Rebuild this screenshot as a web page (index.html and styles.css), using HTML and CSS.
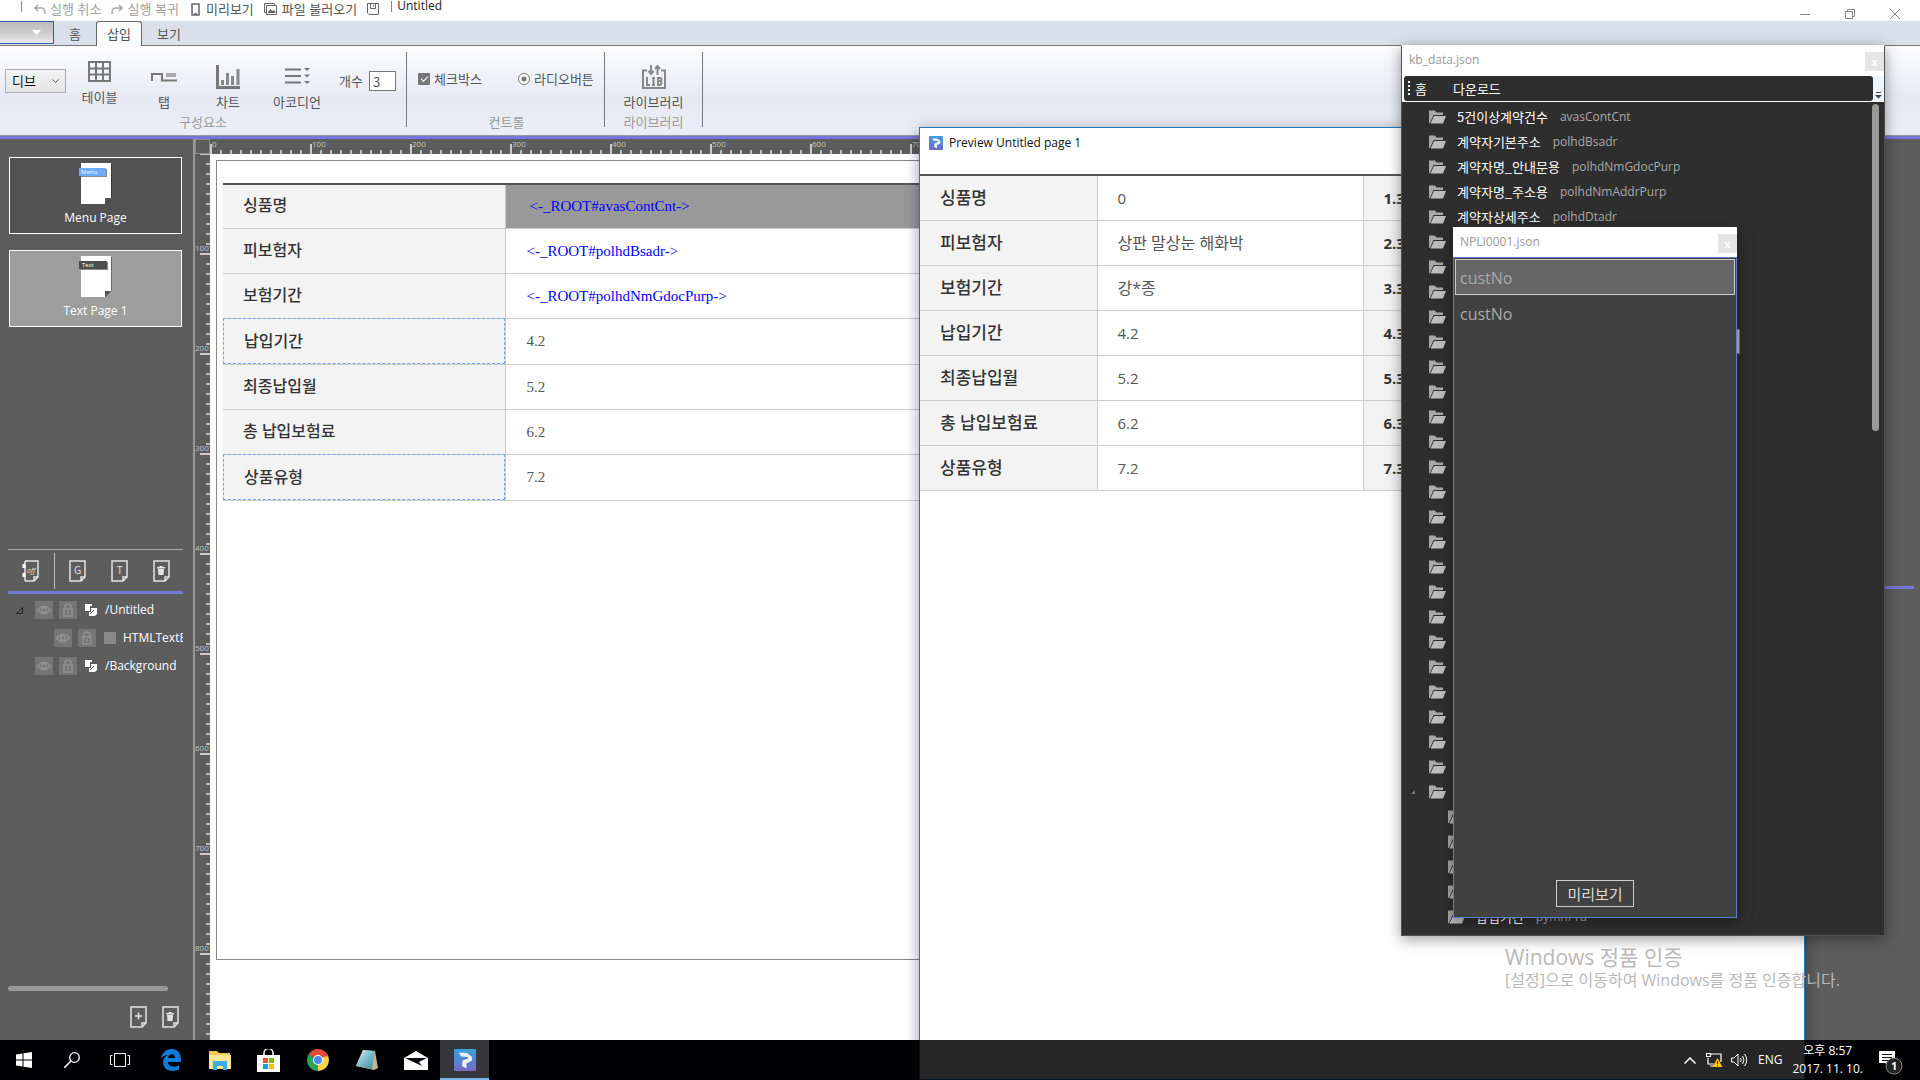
FILE: index.html
```html
<!DOCTYPE html>
<html lang="ko">
<head>
<meta charset="utf-8">
<title>Untitled</title>
<link rel="stylesheet" href="styles.css">
</head>
<body>
<svg width="0" height="0" class="defs" aria-hidden="true">
  <defs>
    <linearGradient id="brand" x1="0" y1="0" x2="0" y2="1"><stop offset="0" stop-color="#3aa0dc"/><stop offset="1" stop-color="#7468c8"/></linearGradient>
    <linearGradient id="glass" x1="0" y1="0" x2="1" y2="1"><stop offset="0" stop-color="#e4f4f8"/><stop offset=".5" stop-color="#7dbccb"/><stop offset="1" stop-color="#3f8ca0"/></linearGradient>
    <symbol id="folder" viewBox="0 0 17 14"><path d="M0 13V0.500h6l1.500 2H14v2.500H4.500L1 13z" fill="#a9a9a9"/><path d="M5 6h12l-3 7.500H1.500z" fill="#bdbdbd"/></symbol>
    <symbol id="eye" viewBox="0 0 18 18"><path d="M2.500 9Q9 1.500 15.500 9Q9 16.500 2.500 9z" fill="none" stroke="#929292" stroke-width="1.500"/><circle cx="9" cy="9" r="2.200" fill="none" stroke="#929292" stroke-width="1.500"/></symbol>
    <symbol id="lock" viewBox="0 0 18 18"><rect x="5" y="8" width="8" height="7" fill="none" stroke="#929292" stroke-width="1.500"/><path d="M6 8V6a3 3 0 0 1 6 0v2M9 10v3" fill="none" stroke="#929292" stroke-width="1.500"/></symbol>
    <symbol id="layers" viewBox="0 0 12 12"><path d="M0 0h7v2H5v5H0z" fill="#fff"/><path d="M6 4h6v6l-2 2H4V8h2z" fill="#fff"/><path d="M5 10l4-4" stroke="#5d5d5d"/></symbol>
    <symbol id="sheet" viewBox="0 0 17 22"><path d="M1 1h15v16l-4 4H1z" fill="none" stroke="#e4e4e4" stroke-width="1.500"/><path d="M16 17h-4v4" fill="none" stroke="#e4e4e4" stroke-width="1.500"/></symbol>
    <symbol id="bin" viewBox="0 0 8 9"><path d="M0 1h2.500V0h3v1H8v1.500H0zM1 3h6l-.5 6h-5z" fill="#e4e4e4"/></symbol>
    <symbol id="brandmark" viewBox="0 0 22 22"><rect width="22" height="22" rx="1" fill="url(#brand)"/><path d="M5 3.500l8 .5 5 4v3.500l-5.500 3v5L8 17l.5-5.500L14 9.500V8l-7-.5z" fill="#f0f0f4"/></symbol>
  </defs>
</svg>

<main class="app">
  <header class="titlebar">
    <span class="bar"></span>
    <button class="quick off q-undo"><svg width="12" height="11" viewBox="0 0 12 11"><path d="M4 1L1 4l3 3M1 4h7q3 0 3 6" fill="none" stroke="#a6a6a6" stroke-width="1.500"/></svg>실행 취소</button>
    <button class="quick off q-redo"><svg width="12" height="11" viewBox="0 0 12 11"><path d="M8 1l3 3-3 3M11 4H4q-3 0-3 6" fill="none" stroke="#a6a6a6" stroke-width="1.500"/></svg>실행 복귀</button>
    <button class="quick q-view"><svg width="9" height="13" viewBox="0 0 9 13"><path d="M1 1h7v11H1zM3 11h3" fill="none" stroke="#666" stroke-width="1.500"/></svg>미리보기</button>
    <button class="quick q-open"><svg width="13" height="12" viewBox="0 0 13 12"><path d="M2.500 9.500h-2v-9h10v1.500M2.500 2.500h10v9h-10z" fill="none" stroke="#666"/><path d="M3.500 10l3-4 2 2 1.500-1 2 3z" fill="#666"/></svg>파일 불러오기</button>
    <button class="quick q-save" aria-label="저장"><svg width="12" height="12" viewBox="0 0 12 12"><path d="M.5.500h11v11H2l-1.500-1.500zM3.500.500v5h5v-5M6.500 1.500v2" fill="none" stroke="#666"/></svg></button>
    <span class="bar thin"></span>
    <span class="doc">Untitled</span>
    <span class="wincontrols">
      <button aria-label="최소화"><svg width="10" height="10"><path d="M0 5.500h10" stroke="#888"/></svg></button>
      <button aria-label="이전 크기로"><svg width="10" height="10"><path d="M.5 2.500h7v7h-7zM2.500 2V.500h7v7H8" fill="none" stroke="#888"/></svg></button>
      <button aria-label="닫기"><svg width="10" height="10"><path d="M0 0l10 10M10 0L0 10" stroke="#888"/></svg></button>
    </span>
  </header>
  <nav class="tabs">
    <button class="filemenu" aria-label="파일"><svg width="9" height="6"><path d="M0 0h9L4.500 5z" fill="#fff"/></svg></button>
    <button class="tab">홈</button>
    <button class="tab on">삽입</button>
    <button class="tab">보기</button>
  </nav>
  <section class="ribbon">
    <div class="group g1">
      <div class="tools">
        <div class="combo"><select aria-label="요소"><option>디브</option></select><svg width="7" height="5"><path d="M.5.500l3 3 3-3" fill="none" stroke="#555"/></svg></div>
        <button class="tool t-table"><svg width="23" height="21" viewBox="0 0 23 21"><path d="M1 1h21v19H1zM1 7.500h21M1 13.500h21M8 1v19M15 1v19" fill="none" stroke="#777" stroke-width="2"/></svg>테이블</button>
        <button class="tool t-tab"><svg width="26" height="9" viewBox="0 0 26 9"><path d="M1 8V1h10v6.500h15" fill="none" stroke="#777" stroke-width="2"/><path d="M15 0h10v4H15z" fill="#aaa"/></svg>탭</button>
        <button class="tool t-chart"><svg width="24" height="24" viewBox="0 0 24 24"><path d="M1.500 0v22.500H24" fill="none" stroke="#777" stroke-width="3"/><path d="M6.500 20v-5M11.500 20V8M16.500 20v-9M22 20V4" stroke="#888" stroke-width="3"/></svg>차트</button>
        <button class="tool t-acc"><svg width="25" height="16" viewBox="0 0 25 16"><path d="M0 1.500h16M0 8h16M0 14.500h16" stroke="#777" stroke-width="2"/><path d="M19 0h6l-3 3zM19 6.500h6l-3 3zM19 13h6l-3 3z" fill="#777"/></svg>아코디언</button>
        <label class="count">개수<input type="text" value="3"></label>
      </div>
      <div class="caption">구성요소</div>
    </div>
    <div class="group g2">
      <div class="tools">
        <label class="opt o-check"><input type="checkbox" checked>체크박스</label>
        <label class="opt"><input type="radio" checked>라디오버튼</label>
      </div>
      <div class="caption">컨트롤</div>
    </div>
    <div class="group g3">
      <div class="tools">
        <button class="tool t-lib"><svg width="24" height="24" viewBox="0 0 24 24"><path d="M5 5.500H1V23h22V5.500h-4" fill="none" stroke="#888" stroke-width="2"/><path d="M9 0v8M15.500 10V2M6.500 6L9 9l2.500-3M13 4l2.500-3L18 4M5 12v8h3M10 13h3M11.500 12v8M10 20h3M16 12v8M15.500 13h3q2 1.500 0 3h-3M18 16q3 2 0 4h-3" fill="none" stroke="#888" stroke-width="2"/></svg>라이브러리</button>
      </div>
      <div class="caption">라이브러리</div>
    </div>
  </section>
  <div class="work">
    <aside class="side">
      <div class="pages">
        <button class="page"><svg width="33" height="42" viewBox="0 0 33 42"><path d="M4 1h29v33l-6 7H4z" fill="#3a3a3a"/><path d="M2 0h30v35h-6v6H2z" fill="#fff"/><path d="M26 41v-6h6z" fill="#555"/><path d="M2 6h26v8H2z" fill="#888"/><path d="M0 5h27v8H0z" fill="#6aacff"/><text x="2" y="11" class="tiny">Menu</text></svg>Menu Page</button>
        <button class="page on"><svg width="33" height="42" viewBox="0 0 33 42"><path d="M4 1h29v33l-6 7H4z" fill="#666"/><path d="M2 0h30v35h-6v6H2z" fill="#fff"/><path d="M26 41v-6h6z" fill="#555"/><path d="M2 6h27v8H2z" fill="#888"/><path d="M0 5h28v8H0z" fill="#4d4d4d"/><text x="3" y="11" class="tiny">Text</text></svg>Text Page 1</button>
      </div>
      <div class="layers">
        <div class="layerbar">
          <button class="k-off" aria-label="off"><svg width="17" height="22"><path d="M3 1h13v16l-4 4H3M16 17h-4v4M3 1v20" fill="none" stroke="#e4e4e4" stroke-width="1.500"/><path d="M2 4v4M2 13v4" stroke="#fff" stroke-width="3"/><text x="5" y="13" class="glyph it">off</text></svg></button>
          <button aria-label="G"><svg width="17" height="22"><use href="#sheet"/><text x="5" y="14" class="glyph">G</text></svg></button>
          <button aria-label="T"><svg width="17" height="22"><use href="#sheet"/><text x="6" y="14" class="glyph">T</text></svg></button>
          <button aria-label="삭제"><svg width="17" height="22"><use href="#sheet"/><use href="#bin" x="4" y="6" width="8" height="9"/></svg></button>
        </div>
        <ul class="tree">
          <li><svg class="exp" width="7" height="7"><path d="M.5 6.500h6v-6z" fill="none" stroke="#222"/></svg><svg class="box"><use href="#eye"/></svg><svg class="box"><use href="#lock"/></svg><svg class="ly"><use href="#layers"/></svg>/Untitled</li>
          <li class="child"><svg class="box"><use href="#eye"/></svg><svg class="box"><use href="#lock"/></svg><span class="sq"></span>HTMLTextE</li>
          <li class="root"><svg class="box"><use href="#eye"/></svg><svg class="box"><use href="#lock"/></svg><svg class="ly"><use href="#layers"/></svg>/Background</li>
        </ul>
        <div class="hscroll"></div>
        <div class="pagebar">
          <button aria-label="추가"><svg width="17" height="22"><use href="#sheet"/><path d="M5 10h7M8.500 6.500v7" stroke="#e4e4e4" stroke-width="1.500"/></svg></button>
          <button aria-label="삭제"><svg width="17" height="22"><use href="#sheet"/><use href="#bin" x="4" y="6" width="8" height="9"/></svg></button>
        </div>
      </div>
    </aside>
    <div class="stage">
      <div class="corner"></div>
      <div class="hruler"><span>0</span><span>100</span><span>200</span><span>300</span><span>400</span><span>500</span><span>600</span><span>700</span></div>
      <div class="vruler"><span>100</span><span>200</span><span>300</span><span>400</span><span>500</span><span>600</span><span>700</span><span>800</span></div>
      <div class="canvas">
        <div class="sheet">
          <table class="grid edit">
            <tr><th>싱품명</th><td class="sel"><a href="#">&lt;-_ROOT#avasContCnt-&gt;</a></td></tr>
            <tr><th>피보험자</th><td><a href="#">&lt;-_ROOT#polhdBsadr-&gt;</a></td></tr>
            <tr><th>보험기간</th><td><a href="#">&lt;-_ROOT#polhdNmGdocPurp-&gt;</a></td></tr>
            <tr class="mark"><th>납입기간</th><td>4.2</td></tr>
            <tr><th>최종납입월</th><td>5.2</td></tr>
            <tr><th>총 납입보험료</th><td>6.2</td></tr>
            <tr class="mark"><th>상품유형</th><td>7.2</td></tr>
          </table>
        </div>
      </div>
    </div>
    <aside class="props"><div class="rule"></div></aside>
  </div>
</main>

<section class="win preview">
  <header><svg width="14" height="14"><use href="#brandmark"/></svg>Preview Untitled page 1</header>
  <table class="grid">
    <tr><th>싱품명</th><td>0</td><th>1.3</th></tr>
    <tr><th>피보험자</th><td class="ko">상판 말상눈 해화박</td><th>2.3</th></tr>
    <tr><th>보험기간</th><td class="ko">강*종</td><th>3.3</th></tr>
    <tr><th>납입기간</th><td>4.2</td><th>4.3</th></tr>
    <tr><th>최종납입월</th><td>5.2</td><th>5.3</th></tr>
    <tr><th>총 납입보험료</th><td>6.2</td><th>6.3</th></tr>
    <tr><th>상품유형</th><td>7.2</td><th>7.3</th></tr>
  </table>
</section>

<section class="win data">
  <header class="wtitle">kb_data.json<button aria-label="닫기">x</button></header>
  <div class="menurow"><div class="menu"><span class="grip"></span><button>홈</button><button>다운로드</button></div><svg width="11" height="25" viewBox="0 0 11 25"><path d="M3 16.500h5" stroke="#444"/><path d="M2 19h7l-3.500 3.500z" fill="#444"/></svg></div>
  <div class="databody">
    <ul class="fields">
      <li><svg><use href="#folder"/></svg>5건이상계약건수<em>avasContCnt</em></li>
      <li><svg><use href="#folder"/></svg>계약자기본주소<em>polhdBsadr</em></li>
      <li><svg><use href="#folder"/></svg>계약자명_안내문용<em>polhdNmGdocPurp</em></li>
      <li><svg><use href="#folder"/></svg>계약자명_주소용<em>polhdNmAddrPurp</em></li>
      <li><svg><use href="#folder"/></svg>계약자상세주소<em>polhdDtadr</em></li>
      <li><svg><use href="#folder"/></svg></li><li><svg><use href="#folder"/></svg></li>
      <li><svg><use href="#folder"/></svg></li><li><svg><use href="#folder"/></svg></li>
      <li><svg><use href="#folder"/></svg></li><li><svg><use href="#folder"/></svg></li>
      <li><svg><use href="#folder"/></svg></li><li><svg><use href="#folder"/></svg></li>
      <li><svg><use href="#folder"/></svg></li><li><svg><use href="#folder"/></svg></li>
      <li><svg><use href="#folder"/></svg></li><li><svg><use href="#folder"/></svg></li>
      <li><svg><use href="#folder"/></svg></li><li><svg><use href="#folder"/></svg></li>
      <li><svg><use href="#folder"/></svg></li><li><svg><use href="#folder"/></svg></li>
      <li><svg><use href="#folder"/></svg></li><li><svg><use href="#folder"/></svg></li>
      <li><svg><use href="#folder"/></svg></li><li><svg><use href="#folder"/></svg></li>
      <li><svg><use href="#folder"/></svg></li><li><svg><use href="#folder"/></svg></li>
      <li class="open"><svg><use href="#folder"/></svg></li>
      <li class="sub"><svg><use href="#folder"/></svg></li><li class="sub"><svg><use href="#folder"/></svg></li>
      <li class="sub"><svg><use href="#folder"/></svg></li><li class="sub"><svg><use href="#folder"/></svg></li>
      <li class="sub"><svg><use href="#folder"/></svg>납입기간<em>pymnPrd</em></li>
    </ul>
    <div class="vscroll"></div>
  </div>
</section>

<span class="knob"></span>
<section class="win dialog">
  <header class="wtitle">NPLI0001.json<button aria-label="닫기">x</button></header>
  <div class="dbody">
    <ul><li class="on">custNo</li><li>custNo</li></ul>
    <button>미리보기</button>
  </div>
</section>

<div class="watermark"><p class="big">Windows 정품 인증</p><p>[설정]으로 이동하여 Windows를 정품 인증합니다.</p></div>

<footer class="taskbar">
  <button aria-label="시작"><svg width="16" height="16"><path d="M0 2.500l6.500-1V7.500H0zM7.500 1.300L16 0v7.500H7.500zM0 8.500h6.500v6L0 13.600zM7.500 8.500H16V16l-8.500-1.300z" fill="#fff"/></svg></button>
  <button aria-label="검색"><svg width="16" height="16"><circle cx="10.500" cy="5.500" r="4.800" fill="none" stroke="#fff" stroke-width="1.300"/><path d="M7 9l-7 7" stroke="#fff" stroke-width="1.500"/></svg></button>
  <button aria-label="작업 보기"><svg width="20" height="14"><path d="M4.500.500h11v13h-11zM2.500 2.500h-2v9h2M17.500 2.500h2v9h-2" fill="none" stroke="#fff"/></svg></button>
  <button class="app1" aria-label="Edge"><svg width="20" height="22" viewBox="0 0 20 22"><path d="M0 10C1 3 6 0 10.500 0 17 0 20 5 20 10v3H7c0 5 7 6 11 3v4.500C10 24 2 21 2 13c0-3 2-5.500 5-7C3 6 1 8 0 10zM7 9h7c0-5-6-5-7 0z" fill="#0f7ad8"/></svg></button>
  <button class="app1" aria-label="탐색기"><svg width="22" height="19" viewBox="0 0 22 19"><path d="M0 0h8l2 2h11v4H0z" fill="#f5c752"/><path d="M0 4h22v14H0z" fill="#ffe797"/><path d="M4 19v-9h14v9h-4v-4H8v4z" fill="#3aaee8"/></svg></button>
  <button class="app1" aria-label="스토어"><svg width="23" height="23" viewBox="0 0 23 23"><path d="M7 7V4a4 4 0 0 1 9 0v3" fill="none" stroke="#fff" stroke-width="1.500"/><path d="M0 6h23v17H0z" fill="#fff"/><path d="M6 9h5v5H6z" fill="#f25022"/><path d="M12 9h5v5h-5z" fill="#7fba00"/><path d="M6 15h5v5H6z" fill="#00a4ef"/><path d="M12 15h5v5h-5z" fill="#ffb900"/></svg></button>
  <button class="app1" aria-label="Chrome"><svg width="22" height="22" viewBox="0 0 22 22"><path d="M11 11L1.500 5.500A11 11 0 0 1 20.500 5.500z" fill="#e24a3c"/><path d="M11 11l9.500-5.500A11 11 0 0 1 11 22z" fill="#fdd247"/><path d="M11 11v11A11 11 0 0 1 1.500 5.500z" fill="#2da45b"/><path d="M11 5.500h9.500l.5 2H11z" fill="#e24a3c"/><circle cx="11" cy="11" r="5" fill="#fff"/><circle cx="11" cy="11" r="4" fill="#4a8af4"/></svg></button>
  <button class="app1" aria-label="메모장"><svg width="22" height="22" viewBox="0 0 22 22"><path d="M7 1l12 1 3 17-4 2L0 17z" fill="#c8b48c"/><path d="M7 1l12 1-3 18-16-3z" fill="url(#glass)"/></svg></button>
  <button class="app1" aria-label="메일"><svg width="24" height="19" viewBox="0 0 24 19"><path d="M0 7l12-7 12 7v12H0z" fill="#fff"/><path d="M1 7h22l-8 4 3 4z" fill="#05070c"/></svg></button>
  <button class="app1 run" aria-label="Untitled"><svg width="22" height="22"><use href="#brandmark"/></svg></button>
  <div class="tray">
    <svg width="12" height="7"><path d="M.5 6.500L6 1l5.500 5.500" fill="none" stroke="#fff" stroke-width="1.500"/></svg>
    <svg width="17" height="14"><path d="M2 5v6h6M5 1h10v8M.5.500h4v3h-4zM4 13h4" fill="none" stroke="#fff" stroke-width="1.200"/><path d="M11.500 5l5 9h-10z" fill="#ffc20e"/><path d="M11.500 8v3M11.500 12v1" stroke="#222"/></svg>
    <svg width="17" height="14"><path d="M.5 5h2.500l4-4v12l-4-4H.5z" fill="none" stroke="#fff"/><path d="M9.500 5q1.500 2 0 4M11.500 3q3 4 0 8M13.500 1q4.500 6 0 12" fill="none" stroke="#fff"/></svg>
    <span>ENG</span>
    <div class="clock"><span>오후 8:57</span><span>2017. 11. 10.</span></div>
    <svg class="note" width="24" height="24" viewBox="0 0 24 24"><path d="M0 0h16v12H9v3l-3-3H0z" fill="#fff"/><path d="M3 3.500h10M3 6.500h10M3 9.500h6" stroke="#111"/><circle cx="15" cy="15" r="8" fill="#222" stroke="#888"/><text x="12" y="19" class="badge">1</text></svg>
  </div>
</footer>
</body>
</html>
```
FILE: styles.css
```css
* { box-sizing: border-box; }
body {
  margin: 0; height: 100vh; overflow: hidden; position: relative; background: #080c16;
  font: 13px/16px "Open Sans", "Noto Sans CJK KR", sans-serif; color: #333;
}
button, input, select { font: inherit; color: inherit; margin: 0; padding: 0; border: 0; background: none; }
ul { list-style: none; margin: 0; padding: 0; }
p { margin: 0; }
svg { display: block; flex: none; }
.defs { position: absolute; }
.app { display: flex; flex-direction: column; height: calc(100vh - 40px); background: #fff; }

.titlebar { display: flex; height: 21px; align-items: flex-start; font-family: "Noto Sans CJK KR", sans-serif; white-space: nowrap; flex: none; }
.bar { width: 1px; height: 11px; margin: 1px 12px 0 21px; background: #888; }
.bar.thin { margin: 1px 5px 0 12px; }
.quick { display: flex; align-items: center; gap: 5px; height: 18px; color: #555; }
.quick.off { color: #a0a0a0; gap: 4px; }
.q-redo { margin-left: 10px; }
.q-view { margin-left: 12px; gap: 6px; }
.q-open, .q-save { margin-left: 10px; }
.doc { font: 12px/12px "Open Sans", sans-serif; color: #222; }
.wincontrols { margin-left: auto; display: flex; gap: 35px; padding: 9px 20px 0 0; }

.tabs { display: flex; height: 25px; background: #dbdfeb; border-bottom: 1px solid #777; font-family: "Noto Sans CJK KR", sans-serif; flex: none; }
.filemenu { width: 54px; height: 23px; border: 1px solid #2a5db0; border-left: 0; background: linear-gradient(#bcbcbc, #ccc 50%, #e8e8e8); padding-left: 32px; }
.tab { width: 42px; height: 25px; color: #555; }
.tab.on { width: 46px; border: 1px solid #666; border-bottom: 0; border-radius: 3px 3px 0 0; background: #fbfcfe; }
.tab:last-child { width: 54px; }

.ribbon { display: flex; height: 90px; background: linear-gradient(#fdfdfe, #e6e9f3 60%, #eceef6); border-bottom: 1px solid #999; padding-top: 6px; font-family: "Noto Sans CJK KR", sans-serif; flex: none; color: #555; }
.group { display: flex; flex-direction: column; height: 75px; border-right: 1px solid #777; }
.tools { display: flex; height: 58px; align-items: flex-end; }
.caption { text-align: center; color: #999; height: 17px; line-height: 24px; }
.g1 { width: 407px; }
.g2 { width: 198px; padding-left: 10px; }
.g3 { width: 98px; }
.g2 .caption { padding-right: 8px; }
.combo { display: grid; grid-template-columns: 1fr 13px; align-items: center; width: 61px; height: 24px; margin: 0 0 17px 5px; border: 1px solid #aaa; color: #111; background: linear-gradient(#f4f4f4, #e4e4e4); }
.combo select { appearance: none; grid-area: 1 / 1 / 2 / 3; height: 22px; padding: 0 6px; }
.combo svg { grid-area: 1 / 2; pointer-events: none; }
.tool { display: flex; flex-direction: column; align-items: center; gap: 5px; line-height: 16px; }
.t-table { width: 67px; gap: 7px; padding-bottom: 5px; }
.t-tab { width: 62px; gap: 12px; }
.t-chart { width: 66px; }
.t-acc { width: 72px; gap: 10px; }
.t-lib { width: 98px; }
.count { display: flex; align-items: center; gap: 6px; margin: 0 0 19px 6px; }
.count input { width: 27px; height: 20px; border: 1px solid #777; background: #fff; padding: 0 3px; }
.opt { display: flex; align-items: center; gap: 4px; height: 16px; margin-bottom: 23px; }
.opt input { appearance: none; width: 12px; height: 12px; border-radius: 1px; background: #777; position: relative; }
.opt input[type=checkbox]::after { content: ""; position: absolute; left: 3px; top: 3px; width: 6px; height: 3px; border: solid #fff; border-width: 0 0 1px 1px; transform: rotate(-45deg); }
.opt input[type=radio] { border: 1px solid #777; border-radius: 50%; background: radial-gradient(circle, #777 2px, #fff 3px); }
.opt.o-check { width: 101px; padding-left: 1px; }

.work { display: flex; flex: 1; min-height: 0; border-top: 3px solid #7578d6; background: #5d5d5d; }
.side { width: 195px; display: flex; flex-direction: column; border-right: 2px solid #999; flex: none; font-size: 12px; color: #fff; }
.pages { flex: 402 1 0; min-height: 0; padding: 18px 11px 0 9px; display: flex; flex-direction: column; gap: 16px; }
.page { height: 77px; border: 1px solid #fff; background: #525252; display: flex; flex-direction: column; align-items: center; gap: 5px; padding-top: 5px; flex: none; }
.page.on { background: #9d9d9d; }
.tiny { font: 6px "Open Sans", sans-serif; fill: #fff; }
.layers { flex: 491 1 0; min-height: 0; display: flex; flex-direction: column; padding: 0 10px 12px 8px; }
.layerbar { display: flex; height: 45px; border-top: 1px solid #aaa; border-bottom: 3px solid #7578d6; align-items: center; flex: none; }
.layerbar button { width: 44px; height: 36px; display: grid; place-items: center; }
.layerbar .k-off { width: 47px; border-right: 1px solid #b4bcc8; padding-right: 2px; flex: none; margin-right: 1px; }
.glyph { font: 10px "Open Sans", sans-serif; fill: #e4e4e4; }
.glyph.it { font-size: 7px; font-style: italic; }
.tree { flex: 1; padding-top: 2px; overflow: hidden; }
.tree li { display: flex; align-items: center; height: 28px; white-space: nowrap; padding-left: 8px; }
.tree .exp { margin-right: 12px; }
.tree .root { padding-left: 27px; }
.tree .child { padding-left: 46px; }
.box { width: 18px; height: 18px; background: #757575; margin-right: 6px; }
.ly { width: 12px; height: 12px; margin: 0 8px 0 2px; }
.sq { width: 12px; height: 12px; background: #888; margin: 0 7px 0 2px; flex: none; }
.hscroll { height: 5px; width: 160px; border-radius: 3px; background: #999; flex: none; }
.pagebar { display: flex; justify-content: flex-end; gap: 15px; padding: 15px 4px 0 0; }

.stage { flex: 1; min-width: 0; display: grid; grid-template: 15px 1fr / 15px 1fr; overflow: hidden; }
.corner { border: 1px solid #888; }
.hruler, .vruler { display: flex; overflow: hidden; font: 8px/8px "Open Sans", sans-serif; color: #c4c4c4; }
.hruler { background: repeating-linear-gradient(90deg, #bbb 0 2px, transparent 2px 10px) bottom / 100% 4px no-repeat; }
.hruler span { flex: none; width: 100px; padding: 1px 0 0 2px; background: linear-gradient(#ccc, #ccc) 0 5px / 2px 10px no-repeat; }
.vruler { flex-direction: column;
  background: linear-gradient(#ccc 2px, transparent 2px) 5px 99px / 10px 100px repeat-y, linear-gradient(#bbb 2px, transparent 2px) 11px 9px / 4px 10px repeat-y; }
.vruler span { flex: none; height: 100px; padding-top: 90px; }
.canvas { background: #fff; padding: 6px 0 0 6px; overflow: hidden; }
.sheet { border: 1px solid #888; border-right: 0; height: 800px; padding: 22px 0 0 6px; }
.grid { border-collapse: collapse; border-top: 2px solid #555; width: 100%; table-layout: fixed; font: 17px/20px "Open Sans", "Noto Sans CJK KR", sans-serif; color: #555; }
.grid th, .grid td { height: 45px; padding: 0 20px; text-align: left; border-bottom: 1px solid #ccc; white-space: nowrap; }
.grid th { background: #f3f3f3; color: #333; font-weight: 500; }
.grid td { border-left: 1px solid #ccc; font-size: 15px; }
.grid .ko { font-size: 16px; }
.grid th:first-child { width: 282px; }
.edit th { font-size: 16px; padding-bottom: 2px; }
.grid.edit td { font: 15px/20px "Liberation Serif", serif; padding-left: 21px; }
.edit tr:first-child th { height: 44px; }
.edit tr:first-child td { height: 44px; }
.edit .mark th { height: 46px; padding-left: 21px; padding-bottom: 0; outline: 1px dashed #6aa8f0; outline-offset: -1px; }
.edit a { color: #00f; text-decoration: none; }
.grid.edit .sel { background: #999; padding-left: 24px; }
.props { width: 120px; padding: 447px 6px 0 0; flex: none; }
.rule { height: 3px; background: #7578d6; }

.win { position: absolute; box-shadow: 0 3px 14px rgba(0, 0, 0, .4); }
.preview { left: 919px; right: 115px; top: 127px; bottom: 0; background: #fff; border: 1px solid #1a7ac4; overflow: hidden; }
.preview header { display: flex; align-items: center; gap: 6px; height: 46px; padding: 0 9px 16px; color: #111; font-size: 12px; }
.preview .grid th:first-child { width: 177px; }
.preview .grid td { width: 266px; }
.preview .grid th:last-child { border-left: 1px solid #ccc; font-weight: 700; font-size: 15px; }

.data { left: 1401px; right: 35px; top: 45px; bottom: 144px; display: flex; flex-direction: column; background: #2e2e2e; border: 1px solid #505050; border-top-color: #fff; }
.wtitle { display: flex; justify-content: space-between; height: 30px; padding: 6px 0 0 7px; background: #fff; color: #999; font-size: 12px; flex: none; }
.wtitle button { width: 19px; height: 19px; background: #e5e5e5; color: #fff; font-weight: 700; font-size: 10px; line-height: 18px; }
.menurow { display: flex; background: #fff; padding: 0 0 1px 2px; flex: none; }
.menurow > svg { background: #eef4fc; }
.menu { flex: 1; height: 25px; background: #2e2e2e; border-radius: 3px; display: flex; align-items: center; color: #fff; font-family: "Noto Sans CJK KR", sans-serif; }
.menu button { margin-right: 26px; }
.grip { width: 2px; height: 15px; margin: 0 5px 0 4px; background: repeating-linear-gradient(#fff 0 2px, transparent 2px 4px); }
.databody { display: flex; flex: 1; min-height: 0; overflow: hidden; padding: 2px 5px 0 27px; }
.fields { flex: 1; color: #fff; font-family: "Noto Sans CJK KR", sans-serif; }
.fields li { display: flex; align-items: center; height: 25px; }
.fields svg { width: 17px; height: 14px; margin-right: 11px; }
.fields em { font: 12px/16px "Open Sans", sans-serif; color: #aaa; margin-left: 12px; }
.fields .sub { padding-left: 19px; }
.fields .open { margin-left: -18px; }
.fields .open::before { content: ""; border: 2px solid transparent; border-right-color: #777; border-bottom-color: #777; margin-right: 14px; }
.vscroll { width: 7px; height: 327px; border-radius: 4px; background: #999; }

.knob { position: absolute; left: 1736px; top: 329px; width: 4px; height: 25px; background: #bbb; border: 1px solid #777; }
.dialog { left: 1453px; right: 183px; top: 227px; bottom: 162px; display: flex; flex-direction: column; background: #414141; }
.dialog .wtitle { padding-top: 7px; }
.dbody { flex: 1; display: flex; flex-direction: column; justify-content: space-between; align-items: center; border: 1px solid #5b7fd6; padding: 1px 1px 10px; }
.dbody ul { align-self: stretch; font-size: 16px; color: #aaa; }
.dbody li { height: 36px; padding: 0 4px; line-height: 36px; border: 1px solid transparent; }
.dbody .on { background: #666; border-color: #ccc; }
.dbody button { width: 78px; height: 27px; border: 1px solid #ccc; color: #ddd; font-size: 15px; }

.watermark { position: absolute; left: 1505px; top: 944px; color: #b8b8b8; font-size: 16px; line-height: 19px; white-space: nowrap; }
.watermark .big { font-size: 21px; line-height: 27px; }

.taskbar { position: absolute; left: 0; right: 0; bottom: 0; height: 40px; display: flex; background: rgba(0, 0, 0, .85); color: #fff; }
.taskbar button { width: 48px; display: grid; place-items: center; }
.taskbar .app1 { width: 49px; }
.taskbar button:nth-child(4) { margin-left: 2px; }
.taskbar .run { background: #35373b; border-bottom: 2px solid #76b9ed; padding-top: 2px; }
.tray { margin-left: auto; display: flex; align-items: center; gap: 10px; font-size: 12px; padding-right: 17px; }
.tray svg:nth-child(2) { margin-right: -2px; }
.clock { display: flex; flex-direction: column; align-items: center; line-height: 18px; }
.note { margin: 6px 0 0 6px; }
.badge { font: 700 11px "Open Sans", sans-serif; fill: #fff; }
```
